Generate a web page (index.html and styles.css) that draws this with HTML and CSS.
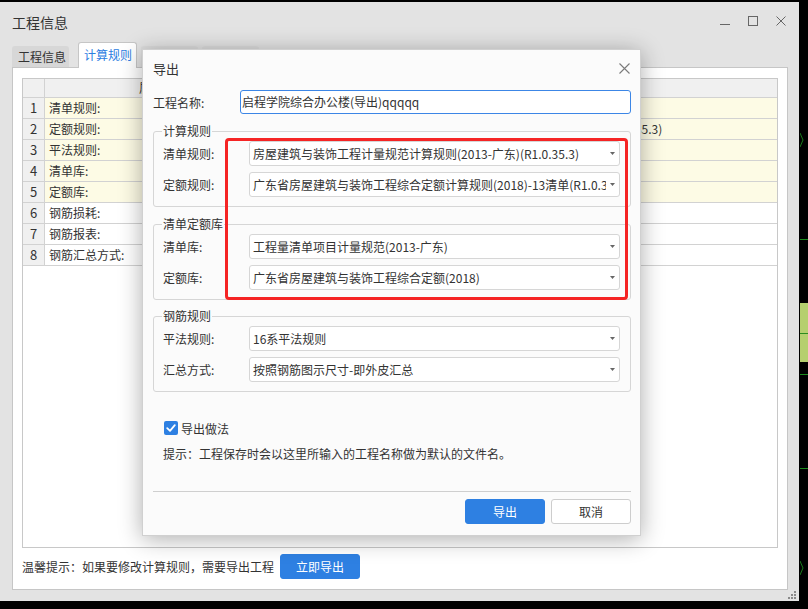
FILE: index.html
```html
<!DOCTYPE html>
<html lang="zh-CN">
<head>
<meta charset="utf-8">
<title>工程信息</title>
<link rel="stylesheet" href="styles.css">
</head>
<body>
<div class="screen">
  <div class="window">
    <div class="titlebar">
      <span class="title">工程信息</span>
      <div class="win-ctrls">
        <svg width="10" height="10" viewBox="0 0 10 10"><line x1="0" y1="8.5" x2="10" y2="8.5" stroke="#666" stroke-width="1"/></svg>
        <svg width="10" height="10" viewBox="0 0 10 10"><rect x="0.5" y="0.5" width="9" height="9" fill="none" stroke="#666" stroke-width="1"/></svg>
        <svg width="10" height="10" viewBox="0 0 10 10"><path d="M0.5 0.5 L9.5 9.5 M9.5 0.5 L0.5 9.5" stroke="#666" stroke-width="1" fill="none"/></svg>
      </div>
    </div>
    <div class="tabs">
      <div class="tab">工程信息</div>
      <div class="tab active">计算规则</div>
      <div class="tab faint">楼层设置</div>
      <div class="tab faint">工程特征</div>
    </div>
    <div class="panel">
      <div class="gridbox">
        <table class="grid">
          <colgroup><col class="c-num"><col class="c-name"><col></colgroup>
          <thead>
            <tr><th></th><th class="h-name">属性名称</th><th>属性值</th></tr>
          </thead>
          <tbody>
            <tr class="hl"><td class="num">1</td><td>清单规则:</td><td class="val">房屋建筑与装饰工程计量规范计算规则(2013-广东)(R1.0.35.3)</td></tr>
            <tr class="hl"><td class="num">2</td><td>定额规则:</td><td class="val">广东省房屋建筑与装饰工程综合定额计算规则(2018)-13清单(R1.0.35.3)</td></tr>
            <tr class="hl"><td class="num">3</td><td>平法规则:</td><td class="val">16系平法规则</td></tr>
            <tr class="hl"><td class="num">4</td><td>清单库:</td><td class="val">工程量清单项目计量规范(2013-广东)</td></tr>
            <tr class="hl"><td class="num">5</td><td>定额库:</td><td class="val">广东省房屋建筑与装饰工程综合定额(2018)</td></tr>
            <tr><td class="num">6</td><td>钢筋损耗:</td><td class="val">不计算损耗</td></tr>
            <tr><td class="num">7</td><td>钢筋报表:</td><td class="val">广东(2018)</td></tr>
            <tr><td class="num">8</td><td>钢筋汇总方式:</td><td class="val">按照钢筋图示尺寸-即外皮汇总</td></tr>
          </tbody>
        </table>
      </div>
      <div class="footer">
        <span class="tip">温馨提示：如果要修改计算规则，需要导出工程</span>
        <button class="btn primary">立即导出</button>
      </div>
    </div>
    <div class="statusbar">
      <svg width="9" height="9" viewBox="0 0 9 9" fill="#8a8a8a"><rect x="6" y="0" width="2" height="2"/><rect x="3" y="3" width="2" height="2"/><rect x="6" y="3" width="2" height="2"/><rect x="0" y="6" width="2" height="2"/><rect x="3" y="6" width="2" height="2"/><rect x="6" y="6" width="2" height="2"/></svg>
    </div>
  </div>

  <div class="cad">
    <svg class="cad-chev c1" width="4" height="14" viewBox="0 0 4 14"><polyline points="0,0 3,7 0,14" fill="none" stroke="#1a7a1a" stroke-width="1"/></svg>
    <div class="cad-line l1"></div>
    <div class="cad-fill"></div>
    <div class="cad-line l2"></div>
    <div class="cad-line l3"></div>
    <div class="cad-line l4"></div>
    <svg class="cad-chev c2" width="4" height="14" viewBox="0 0 4 14"><polyline points="0,0 3,7 0,14" fill="none" stroke="#1a7a1a" stroke-width="1"/></svg>
  </div>

  <div class="dialog">
    <div class="dlg-head">
      <span class="dlg-title">导出</span>
      <svg class="dlg-close" width="11" height="11" viewBox="0 0 11 11"><path d="M0.5 0.5 L10.5 10.5 M10.5 0.5 L0.5 10.5" stroke="#7a7a7a" stroke-width="1.1" fill="none"/></svg>
    </div>
    <div class="name-row">
      <label class="name-label">工程名称:</label>
      <div class="name-input">启程学院综合办公楼(导出)qqqqq</div>
    </div>

    <fieldset class="group g1">
      <legend>计算规则</legend>
      <div class="frow">
        <span class="flabel">清单规则:</span>
        <div class="select"><span class="stext">房屋建筑与装饰工程计量规范计算规则(2013-广东)(R1.0.35.3)</span><svg class="arrow" width="5" height="3" viewBox="0 0 5 3"><path d="M0 0 H5 L2.5 3 Z" fill="#666"/></svg></div>
      </div>
      <div class="frow">
        <span class="flabel">定额规则:</span>
        <div class="select"><span class="stext">广东省房屋建筑与装饰工程综合定额计算规则(2018)-13清单(R1.0.35.3)</span><svg class="arrow" width="5" height="3" viewBox="0 0 5 3"><path d="M0 0 H5 L2.5 3 Z" fill="#666"/></svg></div>
      </div>
    </fieldset>

    <fieldset class="group g2">
      <legend>清单定额库</legend>
      <div class="frow">
        <span class="flabel">清单库:</span>
        <div class="select"><span class="stext">工程量清单项目计量规范(2013-广东)</span><svg class="arrow" width="5" height="3" viewBox="0 0 5 3"><path d="M0 0 H5 L2.5 3 Z" fill="#666"/></svg></div>
      </div>
      <div class="frow">
        <span class="flabel">定额库:</span>
        <div class="select"><span class="stext">广东省房屋建筑与装饰工程综合定额(2018)</span><svg class="arrow" width="5" height="3" viewBox="0 0 5 3"><path d="M0 0 H5 L2.5 3 Z" fill="#666"/></svg></div>
      </div>
    </fieldset>

    <fieldset class="group g3">
      <legend>钢筋规则</legend>
      <div class="frow">
        <span class="flabel">平法规则:</span>
        <div class="select"><span class="stext">16系平法规则</span><svg class="arrow" width="5" height="3" viewBox="0 0 5 3"><path d="M0 0 H5 L2.5 3 Z" fill="#666"/></svg></div>
      </div>
      <div class="frow">
        <span class="flabel">汇总方式:</span>
        <div class="select"><span class="stext">按照钢筋图示尺寸-即外皮汇总</span><svg class="arrow" width="5" height="3" viewBox="0 0 5 3"><path d="M0 0 H5 L2.5 3 Z" fill="#666"/></svg></div>
      </div>
    </fieldset>

    <div class="check-row">
      <span class="checkbox"><svg width="14" height="14" viewBox="0 0 14 14"><path d="M3.2 7.2 L6 9.8 L10.8 4.2" fill="none" stroke="#fff" stroke-width="1.8" stroke-linecap="round" stroke-linejoin="round"/></svg></span>
      <span>导出做法</span>
    </div>
    <div class="hint">提示：工程保存时会以这里所输入的工程名称做为默认的文件名。</div>
    <div class="sep"></div>
    <div class="dlg-buttons">
      <button class="btn primary">导出</button>
      <button class="btn">取消</button>
    </div>

    <div class="highlight"></div>
  </div>
</div>
</body>
</html>
```

FILE: styles.css
```css
* { box-sizing: border-box; }
html, body { margin: 0; padding: 0; }
body {
  background: #000;
  width: 808px;
  height: 609px;
  overflow: hidden;
  font-family: "Noto Sans CJK SC", "Noto Sans", sans-serif;
  font-size: 12px;
  color: #333;
}
.screen {
  position: relative;
  display: flex;
  width: 808px;
  height: 609px;
}

/* ---------- main window ---------- */
.window {
  width: 799px;
  height: 599px;
  margin-top: 2px;
  background: #e3e3e3;
  display: flex;
  flex-direction: column;
  flex-shrink: 0;
}
.titlebar {
  height: 40px;
  display: flex;
  align-items: center;
  padding-left: 12px;
}
.title { font-size: 14px; color: #333; }
.win-ctrls {
  margin-left: auto;
  display: flex;
  align-items: center;
  gap: 18px;
  padding-right: 13px;
  margin-top: -2px;
}
.win-ctrls svg { display: block; }

.tabs {
  height: 25px;
  display: flex;
  align-items: flex-end;
  padding-left: 12px;
  position: relative;
  z-index: 1;
}
.tab {
  height: 21px;
  line-height: 21px;
  padding: 0 3px 0 6px;
  margin-right: 9px;
  background: #d7d7d7;
  border-radius: 3px 3px 0 0;
  color: #333;
  white-space: nowrap;
}
.tab.faint { background: #dcdcdc; margin-right: 4px; }
.tab.active {
  height: 26px;
  line-height: 24px;
  margin-bottom: -1px;
  padding: 0 4px 0 5px;
  background: #fff;
  color: #2b7de1;
  border: 1px solid #c6c6c6;
  border-bottom: none;
  margin-right: 4px;
}

.panel {
  height: 523px;
  margin: 0 11px 0 12px;
  background: #fff;
  border: 1px solid #c6c6c6;
  padding: 10px 9px 10px 9px;
  display: flex;
  flex-direction: column;
}
.gridbox {
  flex: 1;
  border: 1px solid #c8c8c8;
  overflow: hidden;
}
.grid {
  width: 100%;
  border-collapse: separate;
  border-spacing: 0;
  table-layout: fixed;
}
.c-num { width: 22px; }
.c-name { width: 237px; }
.grid th, .grid td {
  height: 21px;
  line-height: 20px;
  padding: 0 0 0 4px;
  border-right: 1px solid #d2d2d2;
  border-bottom: 1px solid #d2d2d2;
  white-space: nowrap;
  font-weight: normal;
  text-align: left;
  color: #333;
}
.grid th {
  height: 19px;
  line-height: 18px;
  background: #f0f0f0;
  text-align: center;
  padding: 0;
}
.grid th:last-child, .grid td:last-child { border-right: none; }
.grid td.num {
  background: #f0f0f0;
  text-align: center;
  padding: 0;
  font-size: 13px;
}
.grid tr.hl td:not(.num) { background: #fdfbe5; }
.grid td.val { overflow: visible; padding-left: 5px; }

.footer {
  height: 25px;
  margin-top: 6px;
  display: flex;
  align-items: center;
  gap: 6px;
}
.tip { color: #333; }

.btn {
  width: 80px;
  height: 25px;
  border: 1px solid #cdcdcd;
  border-radius: 3px;
  background: #fff;
  color: #333;
  font-family: inherit;
  font-size: 12px;
  padding: 0;
  line-height: 23px;
}
.btn.primary {
  background: #2e80e2;
  border-color: #2e80e2;
  color: #fff;
}

.statusbar {
  flex: 1;
  display: flex;
  justify-content: flex-end;
  align-items: flex-start;
  padding: 1px 2px 0 0;
}
.statusbar svg { display: block; }

/* ---------- CAD background strip ---------- */
.cad {
  position: relative;
  width: 9px;
  height: 609px;
  background: #000;
}
.cad-fill {
  position: absolute;
  left: 1px; right: 0;
  top: 303px; height: 59px;
  background: #b5cf6e;
}
.cad-line {
  position: absolute;
  left: 1px; right: 0;
  height: 1px;
  background: #1c8a1c;
}
.cad-line.l1 { top: 239px; }
.cad-line.l2 { top: 333px; background: #2c8c20; }
.cad-line.l3 { top: 374px; }
.cad-line.l4 { top: 468px; }
.cad-chev { position: absolute; left: 1px; display: block; }
.cad-chev.c1 { top: 133px; }
.cad-chev.c2 { top: 561px; }

/* ---------- export dialog ---------- */
.dialog {
  position: absolute;
  left: 142px;
  top: 49px;
  width: 499px;
  background: #fbfbfb;
  border: 1px solid #d0d0d0;
  box-shadow: 0 3px 22px rgba(0, 0, 0, 0.32);
  padding: 0 9px 11px 10px;
  display: flex;
  flex-direction: column;
  z-index: 5;
}
.dlg-head {
  height: 40px;
  display: flex;
  align-items: center;
  padding-bottom: 3px;
}
.dlg-title { font-size: 13px; color: #333; }
.dlg-close { margin-left: auto; margin-right: 1px; display: block; }

.name-row {
  height: 24px;
  display: flex;
  align-items: center;
}
.name-label { width: 87px; flex-shrink: 0; }
.name-input {
  flex: 1;
  height: 24px;
  line-height: 22px;
  border: 1px solid #3c86e6;
  border-radius: 3px;
  background: #fff;
  padding: 0 1px;
  font-size: 12px;
  white-space: nowrap;
  overflow: hidden;
}

.group {
  margin: 9px 0 0 0;
  padding: 2px 10px 9px 9px;
  border: 1px solid #d6d6d6;
  border-radius: 3px;
  min-width: 0;
}
.group.g3 { margin-top: 8px; }
.group legend {
  padding: 0 1px;
  margin-left: -1px;
  line-height: 16px;
  font-size: 12px;
  color: #333;
}
.frow {
  height: 25px;
  display: flex;
  align-items: center;
}
.frow + .frow { margin-top: 6px; }
.flabel { width: 86px; flex-shrink: 0; }
.select {
  flex: 1;
  min-width: 0;
  height: 25px;
  border: 1px solid #d6d6d6;
  border-radius: 3px;
  background: #fff;
  display: flex;
  align-items: center;
  padding: 0 4px 0 3px;
}
.stext {
  flex: 1;
  min-width: 0;
  white-space: nowrap;
  overflow: hidden;
  margin-right: 4px;
  color: #333;
}
.arrow { display: block; flex-shrink: 0; }

.check-row {
  height: 16px;
  margin-top: 28px;
  padding-left: 11px;
  display: flex;
  align-items: center;
  gap: 3px;
}
.checkbox {
  width: 14px;
  height: 14px;
  border-radius: 2px;
  background: #2e80e2;
  display: block;
}
.checkbox svg { display: block; }
.hint {
  margin-top: 10px;
  padding-left: 10px;
  line-height: 16px;
  color: #333;
}
.sep {
  height: 1px;
  background: #cfcfcf;
  margin-top: 29px;
}
.dlg-buttons {
  margin-top: 7px;
  display: flex;
  justify-content: flex-end;
  gap: 6px;
}

.highlight {
  position: absolute;
  left: 82px;
  top: 88px;
  width: 403px;
  height: 162px;
  border: 3px solid #f52424;
  border-radius: 4px;
  pointer-events: none;
}
```
